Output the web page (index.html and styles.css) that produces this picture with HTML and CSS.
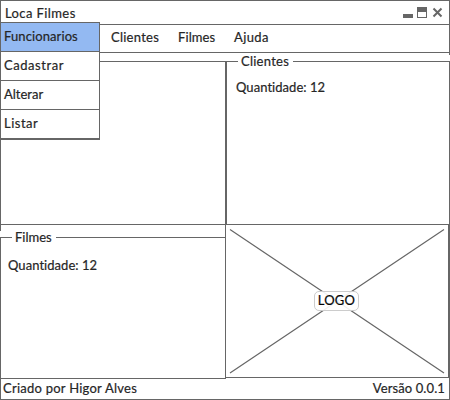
FILE: index.html
```html
<!DOCTYPE html>
<html lang="pt-BR">
<head>
<meta charset="utf-8">
<title>Loca Filmes</title>
<link rel="stylesheet" href="styles.css">
</head>
<body>
<div class="window">
  <header class="titlebar">
    <span class="title">Loca Filmes</span>
    <svg class="controls" width="40" height="12" viewBox="0 0 40 12">
      <path fill="#666" d="M0 7h10v4H0zM14 0h10v11H14z"/>
      <path fill="#fff" d="M15 5h8v5h-8z"/>
      <path d="M30.500 1.500l8 8M38.500 1.500l-8 8" stroke="#666" stroke-width="2"/>
    </svg>
  </header>
  <nav class="menubar">
    <span class="m-clientes">Clientes</span>
    <span class="m-filmes">Filmes</span>
    <span class="m-ajuda">Ajuda</span>
    <ul class="dropdown">
      <li class="active"><span class="d-func">Funcionarios</span></li>
      <li><span class="d-cad">Cadastrar</span></li>
      <li><span class="d-alt">Alterar</span></li>
      <li><span class="d-list">Listar</span></li>
    </ul>
  </nav>
  <main class="content">
    <section class="panel"><fieldset></fieldset></section>
    <section class="panel">
      <fieldset class="clientes"><legend><span class="l-clientes">Clientes</span></legend><p class="quantity">Quantidade: 12</p></fieldset>
    </section>
    <section class="panel lower">
      <fieldset class="filmes"><legend><span class="l-filmes">Filmes</span></legend><p class="quantity">Quantidade: 12</p></fieldset>
    </section>
    <section class="picture">
      <svg class="cross" width="222" height="152" viewBox="0 0 222 152">
        <path d="M4 4.500L218 148M218 4.500L4 148" fill="none" stroke="#666" stroke-width="1.200"/>
      </svg>
      <span class="logo">LOGO</span>
    </section>
  </main>
  <footer class="status"><span class="author">Criado por Higor Alves</span><span class="version">Versão 0.0.1</span></footer>
</div>
</body>
</html>
```

FILE: styles.css
```css
* { box-sizing: border-box; }
body {
  margin: 0;
  background: #fff;
  color: #262626;
  font: 13px/16px Lato, "Liberation Sans", sans-serif;
  -webkit-text-stroke: 0.2px #262626;
  white-space: nowrap;
}
.window {
  width: 450px;
  height: 400px;
  border: 1px solid #666;
  display: flex;
  flex-direction: column;
}
.titlebar {
  height: 24px;
  flex: none;
  border-bottom: 1px solid #666;
  display: flex;
  justify-content: space-between;
  padding: 4px 6px 0 4px;
}
.controls { margin-top: 2px; }
.title { letter-spacing: 0.4px; }
.menubar {
  position: relative;
  height: 28px;
  flex: none;
  border-bottom: 1px solid #666;
  padding: 4px 0 0 110px;
  display: flex;
}
.m-clientes { width: 67px; letter-spacing: 0.25px; }
.m-filmes { width: 56px; letter-spacing: 0.1px; }
.m-ajuda { letter-spacing: 0.4px; }
.dropdown {
  position: absolute;
  z-index: 2;
  left: -1px;
  top: -3px;
  width: 100px;
  height: 118px;
  margin: 0;
  padding: 0;
  list-style: none;
  background: #fff;
  border: 1px solid #666;
  border-bottom-width: 2px;
}
.dropdown li {
  height: 29px;
  padding: 5px 0 0 3px;
  border-bottom: 1px solid #666;
}
.dropdown li:last-child { height: 28px; border-bottom: 0; }
.dropdown .active { background: #93b9f2; }
.d-func { letter-spacing: 0.1px; }
.d-cad { letter-spacing: 0.55px; }
.d-list { letter-spacing: 0.5px; }
.content {
  height: 324px;
  flex: none;
  margin: 2px -1px 0;
  display: grid;
  grid-template-columns: 226px 224px;
  grid-template-rows: 170px 154px;
}
.panel {
  background: #fff;
  padding-top: 6px;
  display: flex;
}
.panel.lower { margin-top: 6px; }
fieldset {
  flex: 1;
  min-width: 0;
  margin: 0;
  padding: 0 9px;
  border: 1px solid #666;
}
fieldset.clientes, fieldset.filmes { margin-top: -6px; }
legend { height: 13px; line-height: 13px; padding: 0; }
.clientes legend { margin-left: 2px; padding: 0 4px 0 3px; }
.filmes legend { margin-left: 2px; padding: 0 4px 0 3px; }
.l-clientes { letter-spacing: 0.25px; }
.quantity { margin: 11px 0 0; letter-spacing: 0.05px; }
.filmes .quantity { margin: 13px 0 0 -2px; }
.picture {
  position: relative;
  width: 224px;
  height: 154px;
  margin: -1px 0 0 -1px;
  border: 1px solid #666;
  display: grid;
  place-items: center;
}
.cross { grid-area: 1 / 1; }
.logo {
  grid-area: 1 / 1;
  z-index: 1;
  width: 45px;
  height: 20px;
  margin-right: 1px;
  border: 1px solid #ccc;
  border-radius: 5px;
  background: rgba(255, 255, 255, .9);
  color: #000;
  text-align: center;
  line-height: 17px;
  letter-spacing: 0.2px;
}
.status {
  height: 20px;
  display: flex;
  justify-content: space-between;
  padding: 1px 4px 0 2px;
}
.author { letter-spacing: 0.25px; }
.version { letter-spacing: 0.1px; }
```
